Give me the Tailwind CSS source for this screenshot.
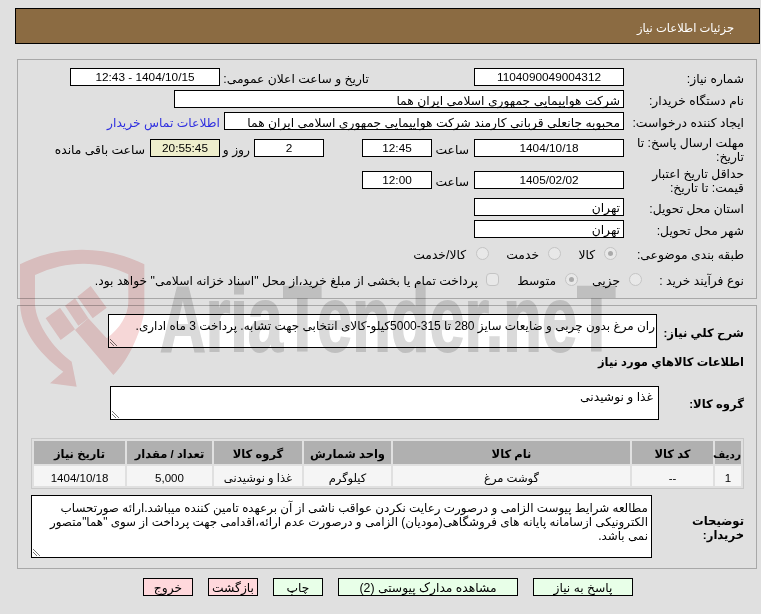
<!DOCTYPE html>
<html lang="fa" dir="rtl">
  <head>
    <meta charset="UTF-8" />
    <title>جزئيات اطلاعات نياز</title>
    <script src="https://cdn.jsdelivr.net/npm/@tailwindcss/browser@4"></script>
  </head>
  <body class="relative h-[614px] w-[761px] overflow-hidden bg-[#e0e0e0] font-['Liberation_Sans','DejaVu_Sans',sans-serif] text-[12.3px] leading-[14px] text-black">
    <!-- Header -->
    <div class="mr-px ml-[15px] pt-2">
      <div class="flex h-[36px] items-center border border-black bg-[#8b6b42] pt-1 pr-[25px] text-[11.5px] text-white">جزئیات اطلاعات نیاز</div>
    </div>

    <!-- Main info -->
    <div class="mt-[15px] mr-[4px] ml-[17px] h-[240px] border border-[#a8a8a8] pt-2 pr-[12px]">
      <div class="flex h-[18px] items-center">
        <div class="w-[120px] pt-1 whitespace-nowrap">شماره نیاز:</div>
        <div class="flex h-[18px] w-[150px] items-center justify-center border border-black bg-white text-[11.8px]">1104090049004312</div>
        <div class="mr-[105px] w-[149px] pt-1 whitespace-nowrap">تاریخ و ساعت اعلان عمومی:</div>
        <div class="flex h-[18px] w-[150px] items-center justify-center border border-black bg-white text-[11.8px]">1404/10/15 - 12:43</div>
      </div>
      <div class="mt-[4px] flex h-[18px] items-center">
        <div class="w-[120px] pt-1 whitespace-nowrap">نام دستگاه خریدار:</div>
        <div class="flex h-[18px] w-[450px] items-center border border-black bg-white pt-[3px] pr-[3px]">شرکت هواپیمایی جمهوری اسلامی ایران هما</div>
      </div>
      <div class="mt-[4px] flex h-[18px] items-center">
        <div class="w-[120px] pt-1 whitespace-nowrap">ایجاد کننده درخواست:</div>
        <div class="flex h-[18px] w-[400px] items-center border border-black bg-white pt-[3px] pr-[3px] whitespace-nowrap">محبوبه جانعلی قربانی کارمند شرکت هواپیمایی جمهوری اسلامی ایران هما</div>
        <a class="mr-1 pt-1 whitespace-nowrap text-[#3030e0]">اطلاعات تماس خریدار</a>
      </div>
      <div class="mt-[9px] flex h-[18px] items-center">
        <div class="w-[120px] pt-1 pl-1">مهلت ارسال پاسخ: تا تاریخ:</div>
        <div class="flex h-[18px] w-[150px] items-center justify-center border border-black bg-white text-[11.8px]">1404/10/18</div>
        <div class="w-[42px] pt-1 pr-[5px] whitespace-nowrap">ساعت</div>
        <div class="flex h-[18px] w-[70px] items-center justify-center border border-black bg-white text-[11.8px]">12:45</div>
        <div class="w-[38px]"></div>
        <div class="flex h-[18px] w-[70px] items-center justify-center border border-black bg-white text-[11.8px]">2</div>
        <div class="w-[34px] pt-1 pr-[4px] whitespace-nowrap">روز و</div>
        <div class="flex h-[18px] w-[70px] items-center justify-center border border-black bg-[#eeeecc] text-[11.8px]">20:55:45</div>
        <div class="mr-[5px] pt-1 whitespace-nowrap">ساعت باقی مانده</div>
      </div>
      <div class="mt-[14px] flex h-[18px] items-center">
        <div class="w-[120px] pt-[2px] pl-1">حداقل تاریخ اعتبار قیمت: تا تاریخ:</div>
        <div class="flex h-[18px] w-[150px] items-center justify-center border border-black bg-white text-[11.8px]">1405/02/02</div>
        <div class="w-[42px] pt-1 pr-[5px] whitespace-nowrap">ساعت</div>
        <div class="flex h-[18px] w-[70px] items-center justify-center border border-black bg-white text-[11.8px]">12:00</div>
      </div>
      <div class="mt-[9px] flex h-[18px] items-center">
        <div class="w-[120px] pt-1 whitespace-nowrap">استان محل تحویل:</div>
        <div class="flex h-[18px] w-[150px] items-center border border-black bg-white pt-[2px] pr-[3px]">تهران</div>
      </div>
      <div class="mt-[4px] flex h-[18px] items-center">
        <div class="w-[120px] pt-1 whitespace-nowrap">شهر محل تحویل:</div>
        <div class="flex h-[18px] w-[150px] items-center border border-black bg-white pt-[2px] pr-[3px]">تهران</div>
      </div>
      <div class="mt-[6px] flex h-[18px] items-center">
        <div class="w-[120px] pt-1 whitespace-nowrap">طبقه بندی موضوعی:</div>
        <span class="mr-[7px] flex h-[13px] w-[13px] items-center justify-center rounded-full border border-[#c4c4c4] bg-[#e8e8e8]"><span class="h-[5px] w-[5px] rounded-full bg-[#aaa]"></span></span>
        <span class="mr-[9px] w-[34px] pt-1">کالا</span>
        <span class="h-[13px] w-[13px] rounded-full border border-[#c4c4c4] bg-[#e8e8e8]"></span>
        <span class="mr-[9px] w-[50px] pt-1">خدمت</span>
        <span class="h-[13px] w-[13px] rounded-full border border-[#c4c4c4] bg-[#e8e8e8]"></span>
        <span class="mr-[10px] pt-1 whitespace-nowrap">کالا/خدمت</span>
      </div>
      <div class="mt-[8px] flex h-[18px] items-center">
        <div class="w-[102px] pt-1 whitespace-nowrap">نوع فرآیند خرید :</div>
        <span class="h-[13px] w-[13px] rounded-full border border-[#c4c4c4] bg-[#e8e8e8]"></span>
        <span class="mr-[9px] w-[42px] pt-1">جزیی</span>
        <span class="flex h-[13px] w-[13px] items-center justify-center rounded-full border border-[#c4c4c4] bg-[#e8e8e8]"><span class="h-[5px] w-[5px] rounded-full bg-[#aaa]"></span></span>
        <span class="mr-[9px] w-[57px] pt-1">متوسط</span>
        <span class="h-[13px] w-[13px] rounded-sm border border-[#c4c4c4] bg-[#e8e8e8]"></span>
        <span class="mr-[8px] pt-1 whitespace-nowrap">پرداخت تمام یا بخشی از مبلغ خرید،از محل "اسناد خزانه اسلامی" خواهد بود.</span>
      </div>
    </div>

    <!-- Description, items -->
    <div class="mt-[6px] mr-[4px] ml-[17px] h-[264px] border border-[#a8a8a8] pt-2 pr-[12px]">
      <div class="flex">
        <div class="w-[87px] pt-[12px] text-[11.6px] font-bold whitespace-nowrap">شرح کلي نیاز:</div>
        <div class="relative h-[34px] w-[549px] border border-black bg-white pt-[4px] pr-px text-[12px] whitespace-nowrap">
          ران مرغ بدون چربی و ضایعات سایز 280 تا 315-5000کیلو-کالای انتخابی جهت تشابه. پرداخت 3 ماه اداری.
          <svg class="absolute bottom-0 left-0" width="9" height="9" viewBox="0 0 9 9"><path d="M1 1 L8 8 M1 4 L5 8" stroke="#777" fill="none" /></svg>
        </div>
      </div>
      <div class="mt-[7px] h-[14px] text-[11.5px] font-bold whitespace-nowrap">اطلاعات کالاهاي مورد نیاز</div>
      <div class="mt-[17px] flex">
        <div class="w-[85px] pt-[11px] text-[11.6px] font-bold whitespace-nowrap">گروه کالا:</div>
        <div class="relative h-[34px] w-[549px] border border-black bg-white pt-[3px] pr-[5px]">
          غذا و نوشیدنی
          <svg class="absolute bottom-0 left-0" width="9" height="9" viewBox="0 0 9 9"><path d="M1 1 L8 8 M1 4 L5 8" stroke="#777" fill="none" /></svg>
        </div>
      </div>
      <table class="mt-[18px] w-[713px] table-fixed border-separate border-spacing-[2px] border border-[#c8c8c8] text-center text-[11.5px]">
        <thead class="bg-[#b0b0b0]">
          <tr class="h-[23px]">
            <th class="w-[26px] p-0 pt-[2px] text-[10.5px] font-bold whitespace-nowrap">ردیف</th>
            <th class="w-[81px] p-0 pt-[2px] font-bold">کد کالا</th>
            <th class="w-[237px] p-0 pt-[2px] font-bold">نام کالا</th>
            <th class="w-[87px] p-0 pt-[2px] font-bold whitespace-nowrap">واحد شمارش</th>
            <th class="w-[88px] p-0 pt-[2px] font-bold">گروه کالا</th>
            <th class="w-[85px] p-0 pt-[2px] font-bold whitespace-nowrap">تعداد / مقدار</th>
            <th class="w-[91px] p-0 pt-[2px] font-bold">تاریخ نیاز</th>
          </tr>
        </thead>
        <tbody class="bg-[#f5f5f5]">
          <tr class="h-[20px]">
            <td class="p-0 pt-[3px]">1</td>
            <td class="p-0 pt-[3px]">--</td>
            <td class="p-0 pt-[3px]">گوشت مرغ</td>
            <td class="p-0 pt-[3px]">کیلوگرم</td>
            <td class="p-0 pt-[3px] whitespace-nowrap">غذا و نوشیدنی</td>
            <td class="p-0 pt-[3px]">5,000</td>
            <td class="p-0 pt-[3px]">1404/10/18</td>
          </tr>
        </tbody>
      </table>
      <div class="mt-[6px] flex">
        <div class="w-[92px] pt-[19px] text-[11.6px] font-bold">توضیحات<br />خریدار:</div>
        <div class="relative h-[63px] w-[621px] border border-black bg-white pt-[5px] pr-[3px] text-[11.9px] whitespace-nowrap">
          مطالعه شرایط پیوست الزامی و درصورت رعایت نکردن عواقب ناشی از آن برعهده تامین کننده میباشد.ارائه صورتحساب<br />
          الکترونیکی ازسامانه پایانه های فروشگاهی(مودیان) الزامی و درصورت عدم ارائه،اقدامی جهت پرداخت از سوی "هما"متصور<br />
          نمی باشد.
          <svg class="absolute bottom-0 left-0" width="9" height="9" viewBox="0 0 9 9"><path d="M1 1 L8 8 M1 4 L5 8" stroke="#777" fill="none" /></svg>
        </div>
      </div>
    </div>

    <!-- Buttons -->
    <div class="mt-[9px] flex gap-[15px] pr-[128px]">
      <button class="h-[18px] w-[100px] border border-black bg-[#e8ffe8] pt-[2px]">پاسخ به نیاز</button>
      <button class="h-[18px] w-[180px] border border-black bg-[#e8ffe8] pt-[2px]">مشاهده مدارک پیوستی (2)</button>
      <button class="h-[18px] w-[50px] border border-black bg-[#e8ffe8] pt-[2px]">چاپ</button>
      <button class="h-[18px] w-[50px] border border-black bg-[#ffd8dc] pt-[2px]">بازگشت</button>
      <button class="h-[18px] w-[50px] border border-black bg-[#ffd8dc] pt-[2px]">خروج</button>
    </div>

    <!-- Watermark -->
    <svg class="pointer-events-none absolute top-[235px] left-0 mix-blend-multiply" width="380" height="160" viewBox="0 0 1140 480">
      <g fill="#f6d7d7">
        <path d="M60 88 C170 30 320 30 433 88 V230 C420 300 385 375 340 420 L225 285 L265 250 L320 310 C360 280 385 240 385 200 V118 C300 75 200 75 105 120 V210 C110 270 160 340 215 380 L230 455 L150 445 L190 410 C110 350 60 280 60 200 Z" />
        <path d="M137 250 L180 218 L225 283 L182 315 Z" />
        <path d="M232 185 L272 153 L320 218 L278 250 Z" />
        <path d="M195 212 L225 190 L265 250 L235 272 Z" />
      </g>
    </svg>
    <div dir="ltr" class="pointer-events-none absolute top-[273px] left-[160px] origin-left scale-x-[0.68] text-[93px] leading-[93px] font-bold whitespace-nowrap text-[#dadada] mix-blend-multiply [-webkit-text-stroke:2px_#dadada]">AriaTender.neT</div>
  </body>
</html>
